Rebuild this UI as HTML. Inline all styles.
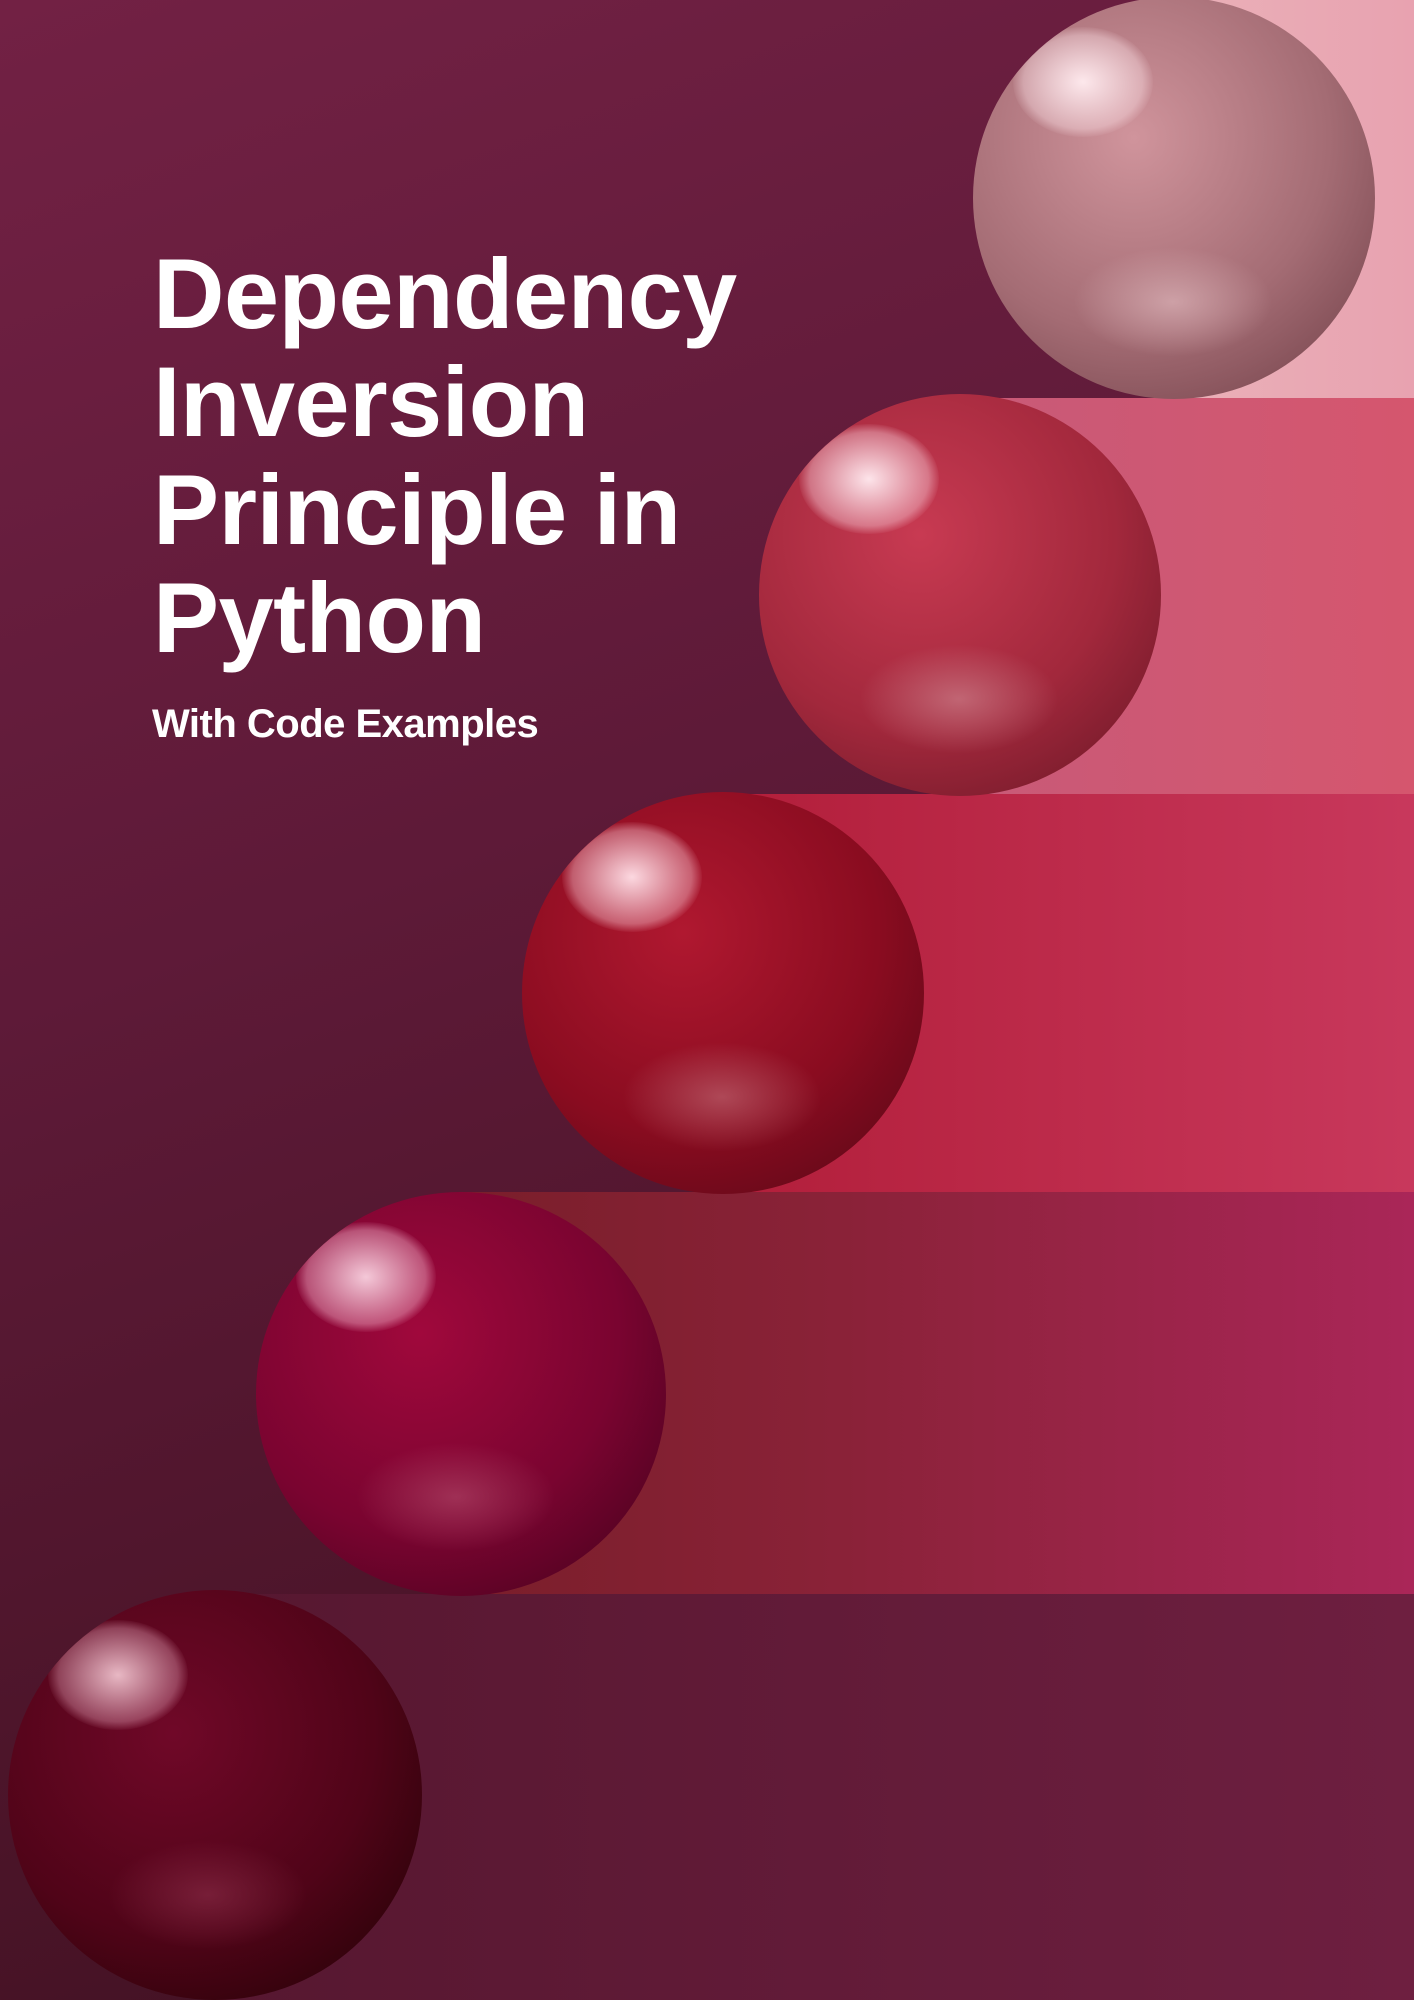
<!DOCTYPE html>
<html><head><meta charset="utf-8"><style>
html,body{margin:0;padding:0}
body{width:1414px;height:2000px;position:relative;overflow:hidden;
background:linear-gradient(160deg,#722144 0%,#5e1a38 40%,#4a1428 75%,#3a0f1e 100%);font-family:"Liberation Sans",sans-serif}
.band{position:absolute;right:0}
.sph{position:absolute;border-radius:50%;overflow:hidden}
.sph .hl{position:absolute;border-radius:50%}
h1{position:absolute;left:153px;top:240px;margin:0;color:#fff;font-size:99px;line-height:108px;font-weight:bold;letter-spacing:-0.5px}
.sub{position:absolute;left:152px;top:702px;color:#fff;font-size:40px;font-weight:bold;letter-spacing:-0.5px}
</style></head><body>
<div class="band" style="left:1186px;top:0;height:398px;background:linear-gradient(90deg,#eab0b8,#e8a2b0)"></div>
<div class="band" style="left:969px;top:398px;height:396px;background:linear-gradient(90deg,#c85a78,#d5566e)"></div>
<div class="band" style="left:727px;top:794px;height:398px;background:linear-gradient(90deg,#b21e3a,#c8385c)"></div>
<div class="band" style="left:459px;top:1192px;height:402px;background:linear-gradient(90deg,#7a1e2a,#8a2238 40%,#aa2658)"></div>
<div class="band" style="left:217px;top:1594px;height:406px;background:linear-gradient(90deg,#561730,#6e1f40)"></div>

<div class="sph" style="left:973px;top:-3px;width:402px;height:402px;background:radial-gradient(circle at 40% 35%,#d0949c 0%,#a46c74 55%,#7a4850 88%,#d8a0a8 100%)">
<div class="hl" style="left:40px;top:30px;width:140px;height:110px;background:radial-gradient(ellipse,#fde8ec 0%,rgba(255,230,235,.4) 60%,transparent 72%)"></div>
<div class="hl" style="left:100px;top:250px;width:200px;height:110px;background:radial-gradient(ellipse,rgba(220,180,185,.7),transparent 70%)"></div></div>

<div class="sph" style="left:759px;top:394px;width:402px;height:402px;background:radial-gradient(circle at 40% 35%,#c83a52 0%,#a2283c 55%,#741a2a 88%,#e86878 100%)">
<div class="hl" style="left:40px;top:30px;width:140px;height:110px;background:radial-gradient(ellipse,#fde4ea 0%,rgba(255,220,230,.4) 60%,transparent 72%)"></div>
<div class="hl" style="left:100px;top:250px;width:200px;height:110px;background:radial-gradient(ellipse,rgba(210,140,150,.6),transparent 70%)"></div></div>

<div class="sph" style="left:522px;top:792px;width:402px;height:402px;background:radial-gradient(circle at 40% 35%,#b01830 0%,#8a0c20 55%,#600818 88%,#d83048 100%)">
<div class="hl" style="left:40px;top:30px;width:140px;height:110px;background:radial-gradient(ellipse,#fcd8e0 0%,rgba(255,210,220,.4) 60%,transparent 72%)"></div>
<div class="hl" style="left:100px;top:250px;width:200px;height:110px;background:radial-gradient(ellipse,rgba(200,120,130,.55),transparent 70%)"></div></div>

<div class="sph" style="left:256px;top:1192px;width:410px;height:404px;background:radial-gradient(circle at 40% 35%,#a0083c 0%,#7a0430 55%,#4e0220 88%,#c01050 100%)">
<div class="hl" style="left:40px;top:30px;width:140px;height:110px;background:radial-gradient(ellipse,#f4c8d8 0%,rgba(255,200,220,.4) 60%,transparent 72%)"></div>
<div class="hl" style="left:100px;top:250px;width:200px;height:110px;background:radial-gradient(ellipse,rgba(190,90,120,.5),transparent 70%)"></div></div>

<div class="sph" style="left:8px;top:1590px;width:414px;height:410px;background:radial-gradient(circle at 40% 35%,#700828 0%,#500418 55%,#2a0208 88%,#80102e 100%)">
<div class="hl" style="left:40px;top:30px;width:140px;height:110px;background:radial-gradient(ellipse,#e8b8c4 0%,rgba(240,180,200,.35) 60%,transparent 72%)"></div>
<div class="hl" style="left:100px;top:250px;width:200px;height:110px;background:radial-gradient(ellipse,rgba(160,60,90,.45),transparent 70%)"></div></div>

<h1>Dependency<br>Inversion<br>Principle in<br>Python</h1>
<div class="sub">With Code Examples</div>
</body></html>
